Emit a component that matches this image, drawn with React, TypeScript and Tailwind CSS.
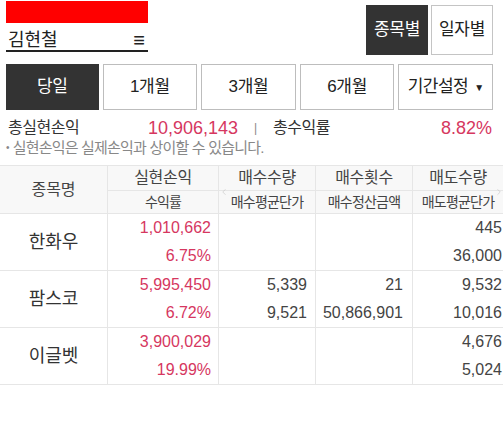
import { ChevronLeft, ChevronRight } from 'lucide-react'

const font = { fontFamily: '"Liberation Sans", "Noto Sans CJK KR", sans-serif' }

const periods = ['당일', '1개월', '3개월', '6개월']

interface Row {
  name: string
  profit: string
  rate: string
  buyQty: string
  buyAvg: string
  buyCount: string
  buyAmount: string
  sellQty: string
  sellAvg: string
}

const rows: Row[] = [
  { name: '한화우', profit: '1,010,662', rate: '6.75%', buyQty: '', buyAvg: '', buyCount: '', buyAmount: '', sellQty: '445', sellAvg: '36,000' },
  { name: '팜스코', profit: '5,995,450', rate: '6.72%', buyQty: '5,339', buyAvg: '9,521', buyCount: '21', buyAmount: '50,866,901', sellQty: '9,532', sellAvg: '10,016' },
  { name: '이글벳', profit: '3,900,029', rate: '19.99%', buyQty: '', buyAvg: '', buyCount: '', buyAmount: '', sellQty: '4,676', sellAvg: '5,024' },
]

function Cell({ top, bottom, w, red, pr = 'pr-[7px]' }: { top: string; bottom: string; w: string; red?: boolean; pr?: string }) {
  return (
    <div className={`${w} flex flex-col border-l border-[#e6e6e6] text-right text-[16px] ${pr} ${red ? 'text-[#d6375f]' : 'text-[#444]'}`}>
      <div className="flex h-[28px] items-center justify-end">{top}</div>
      <div className="flex h-[28px] items-center justify-end">{bottom}</div>
    </div>
  )
}

function HeadCell({ top, bottom, w }: { top: string; bottom: string; w: string }) {
  return (
    <div className={`${w} flex flex-col border-l border-[#e6e6e6] text-center text-[#444]`}>
      <div className="flex h-[25px] items-center justify-center border-b border-[#e6e6e6] text-[16px] tracking-[-0.3px]">{top}</div>
      <div className="flex h-[22px] items-center justify-center text-[14px] tracking-[-0.8px]">{bottom}</div>
    </div>
  )
}

export default function App() {
  return (
    <div className="h-[427px] w-[503px] overflow-hidden bg-white" style={font}>
      <div className="flex justify-between pl-[6px] pr-[10px]">
        <div className="flex w-[142px] flex-col">
          <div className="mt-[1px] h-[22px] w-[142px] bg-[#ff0000]" />
          <div className="mt-[7px] flex h-[22px] items-center justify-between border-b-2 border-[#222] pl-[2px] pr-[3px]">
            <span className="text-[18px] leading-[20px] text-[#222]">김현철</span>
            <span className="text-[20px] font-bold leading-none text-[#222]">≡</span>
          </div>
        </div>
        <div className="mt-[5px] flex gap-[3px]">
          <button className="flex h-[50px] w-[62px] items-center justify-center bg-[#333] text-[17px] tracking-[-0.3px] text-white">
            종목별
          </button>
          <button className="flex h-[50px] w-[62px] items-center justify-center border border-[#c4c4c4] bg-white text-[17px] tracking-[-0.3px] text-[#222]">
            일자별
          </button>
        </div>
      </div>

      <div className="mt-[9px] flex gap-[4px] pl-[6px] pr-[10px]">
        {periods.map((p, i) => (
          <button
            key={p}
            className={`flex h-[46px] flex-1 items-center justify-center text-[17px] tracking-[-0.3px] ${
              i === 0 ? 'bg-[#333] text-white' : 'border border-[#bdbdbd] bg-white text-[#222]'
            }`}
          >
            {p}
          </button>
        ))}
        <button className="flex h-[46px] flex-1 items-center justify-center gap-[6px] border border-[#bdbdbd] bg-white text-[17px] tracking-[-0.5px] text-[#222]">
          기간설정
          <span className="text-[10px]">▼</span>
        </button>
      </div>

      <div className="mt-[7px] flex items-center pl-[8px] pr-[11px] leading-[22px]">
        <span className="w-[138px] text-[16px] tracking-[-0.5px] text-[#333]">총실현손익</span>
        <span className="w-[92px] text-right text-[18px] text-[#d6375f]">10,906,143</span>
        <span className="w-[35px] text-center text-[12px] text-[#888]">|</span>
        <span className="text-[16px] tracking-[-0.5px] text-[#333]">총수익률</span>
        <span className="ml-auto text-[18px] text-[#d6375f]">8.82%</span>
      </div>
      <div className="flex items-center gap-[4px] pl-[6px] text-[15px] leading-[17px] tracking-[-0.8px] text-[#888]">
        <span className="text-[10px]">•</span>
        <span>실현손익은 실제손익과 상이할 수 있습니다.</span>
      </div>

      <div className="relative mt-[9px] border-t border-[#e6e6e6]">
        <div className="flex border-b border-[#e6e6e6] bg-[#f8f8f8]">
          <div className="flex w-[107px] items-center justify-center text-[16px] text-[#444]">종목명</div>
          <HeadCell w="w-[111px]" top="실현손익" bottom="수익률" />
          <HeadCell w="w-[97px]" top="매수수량" bottom="매수평균단가" />
          <HeadCell w="w-[97px]" top="매수횟수" bottom="매수정산금액" />
          <HeadCell w="w-[91px]" top="매도수량" bottom="매도평균단가" />
        </div>
        <ChevronLeft className="absolute left-[219px] top-[18px] h-[16px] w-[10px] text-[#b8b8b8]" strokeWidth={1.2} />
        <ChevronRight className="absolute left-[494px] top-[18px] h-[16px] w-[10px] text-[#b8b8b8]" strokeWidth={1.2} />

        {rows.map((r) => (
          <div key={r.name} className="flex border-b border-[#e6e6e6]">
            <div className="flex w-[107px] items-center justify-center text-[18px] text-[#333]">{r.name}</div>
            <Cell w="w-[111px]" top={r.profit} bottom={r.rate} red />
            <Cell w="w-[97px]" top={r.buyQty} bottom={r.buyAvg} pr="pr-[8px]" />
            <Cell w="w-[97px]" top={r.buyCount} bottom={r.buyAmount} pr="pr-[9px]" />
            <Cell w="w-[91px]" top={r.sellQty} bottom={r.sellAvg} pr="pr-[1px]" />
          </div>
        ))}
      </div>
    </div>
  )
}
